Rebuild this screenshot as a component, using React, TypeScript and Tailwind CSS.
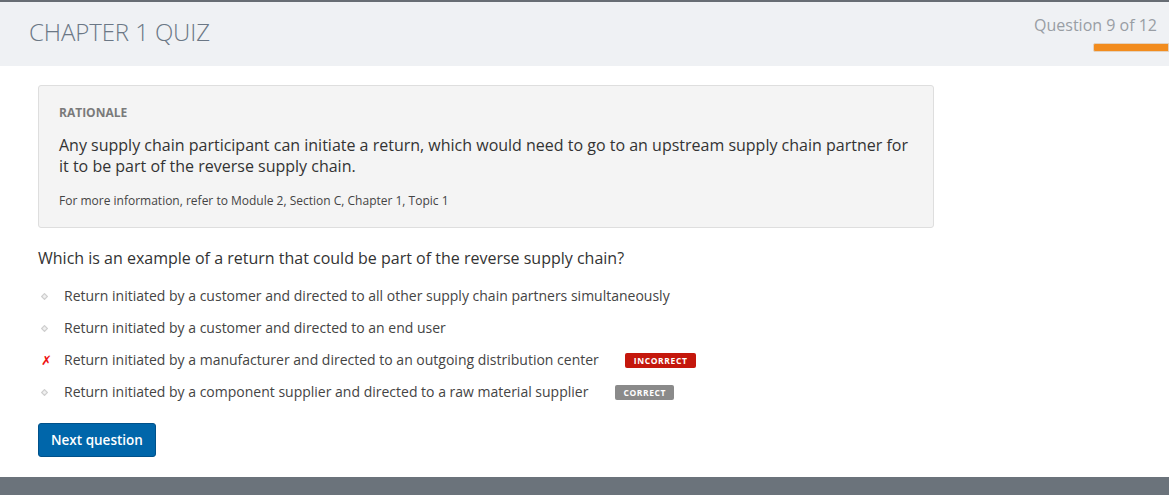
const OPTIONS: { text: string; state?: 'incorrect' | 'correct' }[] = [
  { text: 'Return initiated by a customer and directed to all other supply chain partners simultaneously' },
  { text: 'Return initiated by a customer and directed to an end user' },
  { text: 'Return initiated by a manufacturer and directed to an outgoing distribution center', state: 'incorrect' },
  { text: 'Return initiated by a component supplier and directed to a raw material supplier', state: 'correct' },
];

function Bullet() {
  return (
    <svg width="7" height="7" viewBox="0 0 7 7" className="shrink-0">
      <path d="M3.5 0.6 L6.4 3.5 L3.5 6.4 L0.6 3.5 Z" fill="#f0f0f0" stroke="#cfcfcf" strokeWidth="1.2" />
    </svg>
  );
}

export default function App() {
  return (
    <div className="flex h-[495px] w-full flex-col bg-white font-['Open_Sans',sans-serif] text-[#333]">
      {/* Encabezado */}
      <div className="border-t-2 border-[#676d74] bg-[#eff1f4]">
        <div className="flex h-[64px] items-start justify-between">
          <h1 className="pl-[29px] pt-[13px] text-[24px] font-light leading-[34px] tracking-[-0.1px] text-[#6b7785]">
            CHAPTER 1 QUIZ
          </h1>
          <div className="flex flex-col items-end pt-[12px]">
            <span className="pr-[12px] text-[16px] leading-[22px] text-[#999ea4]">Question 9 of 12</span>
            <div className="mt-[7px] h-[9px] w-[76px] rounded-l-[2px] border border-[#e2d2c0] bg-[#f28c1e]" />
          </div>
        </div>
      </div>

      {/* Contenido */}
      <div className="flex-1 px-[38px] pt-[19px]">
        <div className="w-[896px] rounded-[3px] border border-[#dedede] bg-[#f4f4f4] px-[20px] pb-[18px] pt-[18px]">
          <div className="text-[12px] font-bold leading-[17px] text-[#7a7a7a]">RATIONALE</div>
          <p className="mt-[14px] text-[16px] leading-[21px] text-[#333]">
            Any supply chain participant can initiate a return, which would need to go to an upstream supply chain partner for
            it to be part of the reverse supply chain.
          </p>
          <p className="mt-[15px] text-[12px] leading-[17px] text-[#444]">
            For more information, refer to Module 2, Section C, Chapter 1, Topic 1
          </p>
        </div>

        <p className="mt-[19px] text-[16px] leading-[22px] text-[#333]">
          Which is an example of a return that could be part of the reverse supply chain?
        </p>

        <ul className="mt-[17px] flex flex-col gap-[12px]">
          {OPTIONS.map((o) => (
            <li key={o.text} className="flex h-[20px] items-center">
              <span className="flex w-[26px] shrink-0 items-center justify-start pl-[3px]">
                {o.state === 'incorrect' ? (
                  <span className="font-['DejaVu_Sans',sans-serif] text-[13px] leading-none text-[#ee1111]">✗</span>
                ) : (
                  <Bullet />
                )}
              </span>
              <span className="text-[14px] leading-[20px] text-[#444]">{o.text}</span>
              {o.state === 'incorrect' && (
                <span className="ml-[26px] rounded-[2px] bg-[#c4170c] px-[9px] text-[8.5px] font-bold leading-[15px] tracking-[0.6px] text-white">
                  INCORRECT
                </span>
              )}
              {o.state === 'correct' && (
                <span className="ml-[27px] rounded-[2px] bg-[#8a8a8a] px-[8px] text-[8.5px] font-bold leading-[15px] tracking-[0.6px] text-white">
                  CORRECT
                </span>
              )}
            </li>
          ))}
        </ul>

        <button className="mt-[21px] h-[34px] rounded-[3px] border border-[#00518a] bg-[#0066aa] px-[12px] text-[13.5px] font-semibold text-white">
          Next question
        </button>
      </div>

      {/* Pie */}
      <div className="h-[18px] bg-[#6b737b]" />
    </div>
  );
}
